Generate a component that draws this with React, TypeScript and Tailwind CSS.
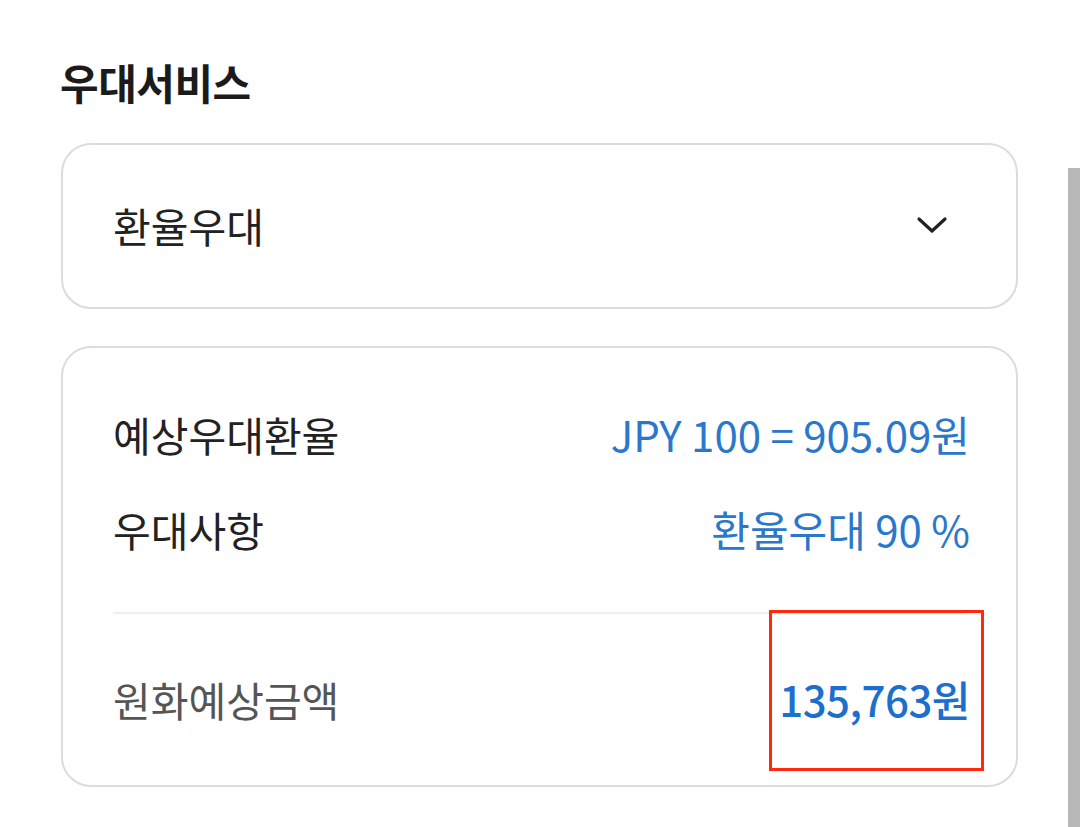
export default function App() {
  const rows = [
    { label: "예상우대환율", value: "JPY 100 = 905.09원" },
    { label: "우대사항", value: "환율우대 90 %" },
  ];

  return (
    <div
      className="relative w-[1080px] h-[827px] overflow-hidden bg-white"
      style={{ fontFamily: '"Noto Sans CJK KR", "Noto Sans", sans-serif' }}
    >
      {/* scrollbar thumb */}
      <div className="absolute right-0 top-[168px] bottom-0 w-[12px] bg-[#b8b8b8]" />

      <div className="pl-[60px] pr-[62px] pt-[58px]">
        <h2 className="text-[42px] leading-[48px] font-bold text-[#1b1b1b] tracking-[-0.5px]">
          우대서비스
        </h2>

        {/* select */}
        <div className="mt-[37px] ml-px h-[166px] rounded-[30px] border-2 border-[#dcdcdc] flex items-center justify-between pl-[50px] pr-[68px] pb-[2px]">
          <span className="text-[41px] leading-[48px] text-[#222]">환율우대</span>
          <svg
            width="32"
            height="18"
            viewBox="0 0 32 18"
            fill="none"
            stroke="#222"
            strokeWidth="3.2"
            strokeLinecap="round"
            strokeLinejoin="round"
          >
            <path d="M3 3l13 12L29 3" />
          </svg>
        </div>

        {/* summary card */}
        <div className="relative mt-[37px] ml-px rounded-[30px] border-2 border-[#dcdcdc] pl-[50px] pr-[46px] pt-[62px] pb-[62px]">
          <div className="flex flex-col gap-[47px]">
            {rows.map((row) => (
              <div key={row.label} className="flex items-center justify-between">
                <span className="text-[41px] leading-[48px] text-[#222]">{row.label}</span>
                <span className="text-[42px] leading-[48px] text-[#2a78cc]">
                  {row.value}
                </span>
              </div>
            ))}
          </div>

          <div className="mt-[59px] mr-[4px] h-[2px] bg-[#eceef2]" />

          <div className="mt-[61px] flex items-center justify-between">
            <span className="text-[41px] leading-[48px] text-[#555]">원화예상금액</span>
            <span className="relative text-[42px] leading-[48px] font-medium text-[#1c6fcc] tracking-[-0.5px]">
              135,763원
              <span className="absolute -left-[10px] -right-[14px] -top-[65px] -bottom-[48px] border-[3px] border-[#ff2a0d]" />
            </span>
          </div>
        </div>
      </div>
    </div>
  );
}
